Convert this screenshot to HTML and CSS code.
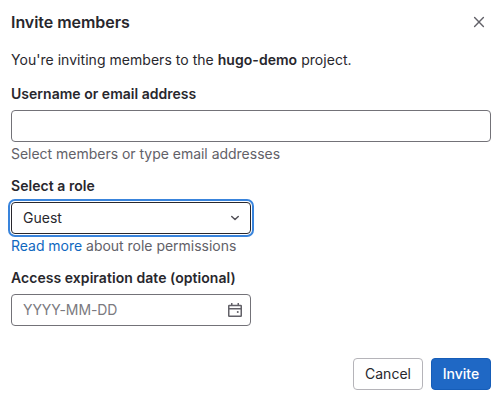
FILE: index.html
```html
<!DOCTYPE html>
<html lang="en">
<head>
<meta charset="utf-8">
<title>Invite members</title>
<link rel="stylesheet" href="styles.css">
</head>
<body>
<main class="modal">
  <header class="modal-header">
    <h1 class="title">Invite members</h1>
    <button class="close" aria-label="Close"><svg width="16" height="16" viewBox="0 0 16 16" fill="none" stroke="currentColor" stroke-width="1.4" stroke-linecap="round"><path d="M3.6 3.6l8.8 8.8M12.4 3.6l-8.8 8.8"/></svg></button>
  </header>
  <p class="intro">You're inviting members to the <strong>hugo-demo</strong> project.</p>
  <section class="group">
    <label class="label" for="members">Username or email address</label>
    <input class="field" id="members" type="text">
    <p class="help">Select members or type email addresses</p>
  </section>
  <section class="group">
    <div class="label label-role">Select a role</div>
    <button class="field narrow select"><span>Guest</span><svg width="16" height="16" viewBox="0 0 16 16" fill="none" stroke="currentColor" stroke-width="1.5" stroke-linecap="round" stroke-linejoin="round"><path d="M4.75 6.5L8 9.5l3.25-3"/></svg></button>
    <p class="help help-role"><a class="link" href="#">Read more</a> about role permissions</p>
  </section>
  <section class="group">
    <div class="label label-date">Access expiration date (optional)</div>
    <div class="field narrow date"><span>YYYY-MM-DD</span><svg width="16" height="16" viewBox="0 0 16 16" fill="none" stroke="currentColor" stroke-width="1.5"><rect x="1.75" y="3.5" width="12.5" height="10.75" rx=".5"/><path d="M2 6.75h12M4.75 1v2.5M11.25 1v2.5"/><circle cx="10.75" cy="10" r="1" fill="currentColor" stroke="none"/></svg></div>
  </section>
  <footer class="actions"><button class="btn">Cancel</button><button class="btn confirm">Invite</button></footer>
</main>
</body>
</html>
```
FILE: styles.css
```css
* { box-sizing: border-box; }
body { margin: 0; background: #fff; color: #28272d; font: 14px/20px Inter, "Liberation Sans", sans-serif; }
.modal { height: 404px; padding: 12px 11px 0; }
button { font: inherit; color: inherit; }
h1, p { margin: 0; }
.modal-header { display: flex; justify-content: space-between; height: 38px; }
.title { font-size: 16px; line-height: 20px; font-weight: 600; letter-spacing: -.05px; }
.close { width: 24px; height: 20px; padding: 0; border: 0; background: none; color: #626168; }
.close svg { display: block; margin: 2px auto; }
strong { font-weight: 600; }
.intro { margin-bottom: 14px; letter-spacing: .035px; }
.group { margin-bottom: 12px; }
.label { display: block; font-weight: 600; margin-bottom: 6px; letter-spacing: .02px; }
.label-role, .label-date { letter-spacing: .05px; }
.field { display: flex; align-items: center; justify-content: space-between; width: 480px; height: 32px; padding: 0 11px; border: 1px solid #737278; border-radius: 4px; background: #fff; }
.narrow { width: 240px; padding: 0 7px 0 11px; }
.help { margin-top: 2px; color: #626168; letter-spacing: -.02px; }
.link { color: #1068bf; text-decoration: none; }
.select { border-color: #28272d; box-shadow: 0 0 0 1px #fff, 0 0 0 3px #3984dc; }
.select svg { color: #535158; }
.date { color: #7b7a80; }
.date span { letter-spacing: -.1px; }
.date svg { color: #626168; }
.actions { display: flex; justify-content: flex-end; gap: 8px; margin-top: 32px; }
.btn { width: 70px; height: 32px; padding: 0; border: 1px solid #b5b4b9; border-radius: 4px; background: #fff; }
.confirm { width: 60px; background: #1f68c5; border-color: #165db8; color: #fff; font-weight: 500; }
```
